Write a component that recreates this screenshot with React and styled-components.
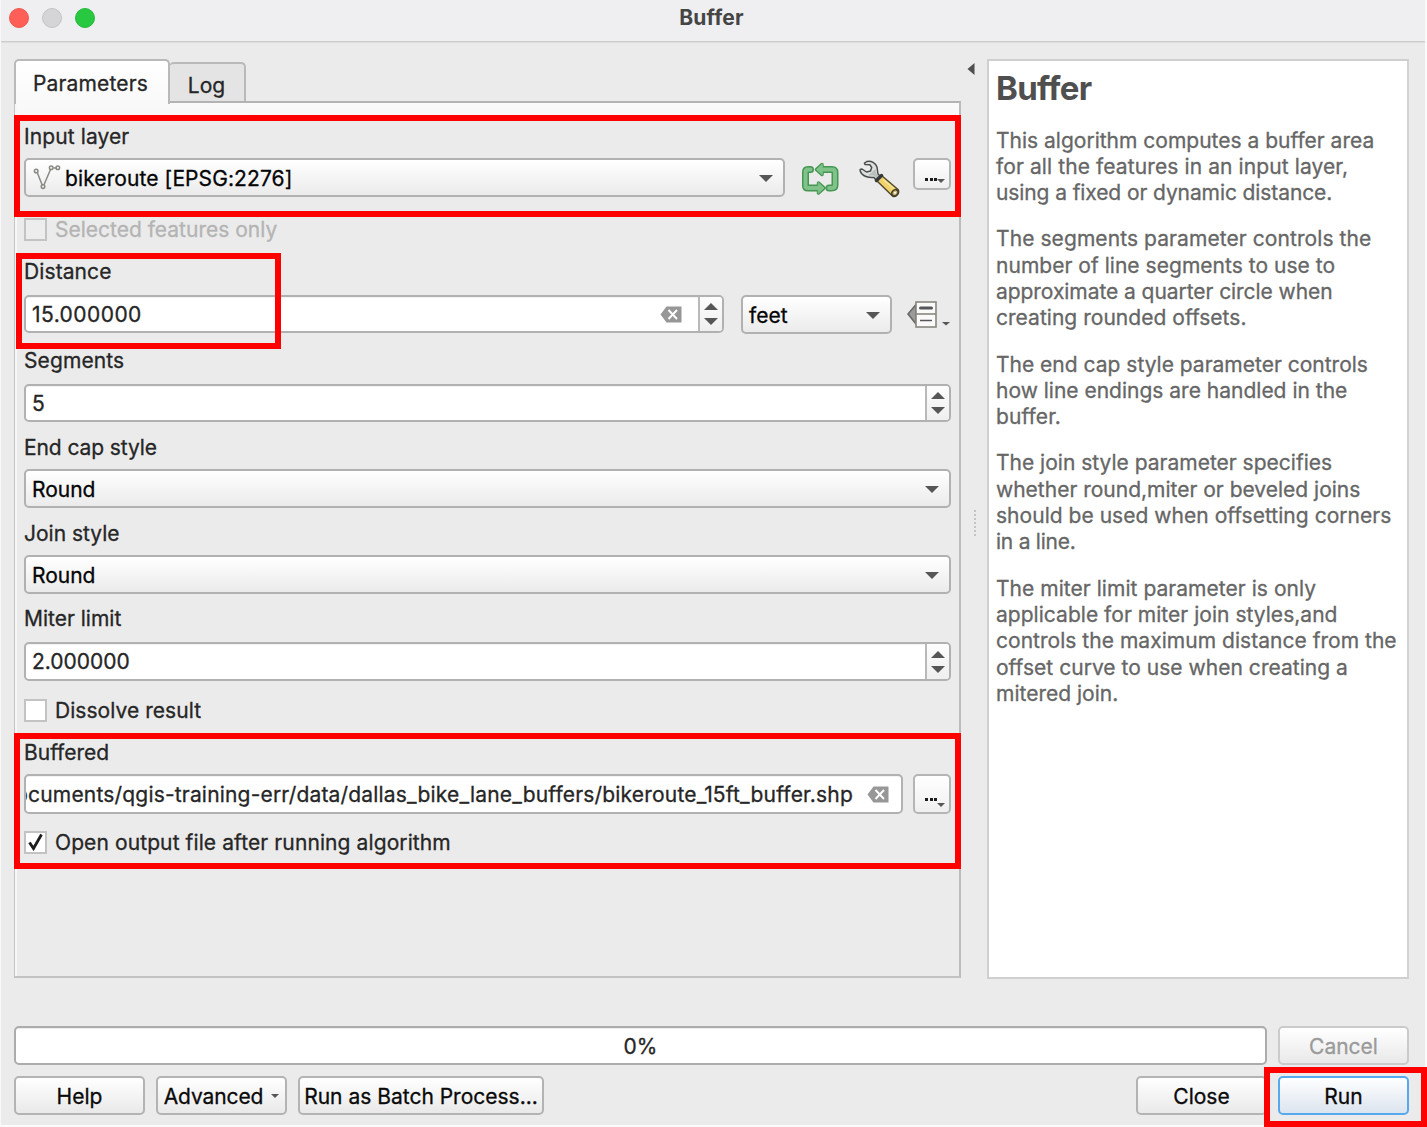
import React from "react";
import styled, { createGlobalStyle } from "styled-components";

const Global = createGlobalStyle`
  *, *::before, *::after { box-sizing: border-box; }
  html, body { margin: 0; padding: 0; background: #ebebeb; }
  body { font-family: Inter, "Liberation Sans", sans-serif; color: #262626; overflow: hidden; }
`;

const Stage = styled.div`
  position: relative;
  width: 1427px;
  height: 1127px;
  overflow: hidden;
`;

const Window = styled.div`
  width: 1427px;
  height: 1127px;
  background: #ebebeb;
  border-left: 1px solid #f8f8f8;
  border-right: 2px solid #fafafa;
  border-bottom: 2px solid #fbfbfb;
  display: flex;
  flex-direction: column;
  overflow: hidden;
`;

const TitleBar = styled.header`
  height: 42px;
  flex: none;
  display: grid;
  grid-template-columns: 120px 1fr 120px;
  background: #efeff1;
  border-bottom: 1px solid #cdcdcd;
  box-shadow: 0 1px 0 #dedede;
`;

const Lights = styled.div`
  display: flex;
  gap: 13px;
  padding: 8px 0 0 7.5px;
`;

const Light = styled.i`
  width: 20px;
  height: 20px;
  border-radius: 50%;
  background: ${(p) => p.$color};
  border: 1px solid ${(p) => p.$edge};
`;

const Title = styled.h1`
  margin: 0;
  text-align: center;
  font-size: 21px;
  line-height: 35px;
  font-weight: 700;
  letter-spacing: 0.2px;
  color: #454545;
  padding-right: 3px;
`;

const Text = styled.span`
  font-size: 21px;
  letter-spacing: ${(p) => p.$ls || 0}px;
  -webkit-text-stroke: 0.3px currentColor;
  color: ${(p) => p.$color || "inherit"};
  white-space: nowrap;
`;

const Body = styled.main`
  display: flex;
  height: 937px;
  padding-left: 13px;
  flex: none;
`;

const TabArea = styled.section`
  width: 947px;
  padding-top: 17px;
  display: flex;
  flex-direction: column;
`;

const Tabs = styled.nav`
  display: flex;
  align-items: flex-end;
  height: 44px;
  flex: none;
`;

const Tab = styled.div`
  display: flex;
  align-items: center;
  justify-content: center;
  border: 2px solid #b9b9b9;
  border-bottom: 0;
  border-radius: 5px 5px 0 0;
  ${(p) =>
    p.$active
      ? `width: 156px; height: 45px; margin-bottom: -1px; z-index: 1; padding-top: 1px;
         background: linear-gradient(#ffffff, #f9f9f9); padding-right: 3px;`
      : `width: 77px; height: 40px; margin-left: -1px; padding-top: 4px; margin-bottom: 1px;
         background: #e4e4e4; border-left: 0;`}
`;

const Pane = styled.div`
  margin-top: -2px;
  height: 877px;
  border: 2px solid #b3b3b3;
  border-left: 1px solid #c4c4c4;
  border-right-color: #bcbcbc;
  border-bottom: 2px solid #c2c2c2;
  padding: 20px 8px 0 9px;
  background: linear-gradient(#fafafa, #f7f7f7 13px, #ebebeb 14px);
  box-shadow: inset 2px 0 0 #f7f7f7;
  display: flex;
  flex-direction: column;
`;

const Label = styled.div`
  height: 26px;
  line-height: 28px;
  flex: none;
  margin-top: ${(p) => p.$top || 0}px;
`;

const Row = styled.div`
  display: flex;
  align-items: flex-start;
  flex: none;
  height: ${(p) => p.$h || 40}px;
  margin-top: ${(p) => p.$top || 0}px;
`;

const Combo = styled.div`
  display: flex;
  align-items: center;
  justify-content: space-between;
  width: ${(p) => (p.$w ? p.$w + "px" : "100%")};
  height: 39px;
  padding: 1px 10px 0 6px;
  margin-left: ${(p) => p.$left || 0}px;
  border: 2px solid #b1b1b1;
  border-radius: 5px;
  background: linear-gradient(#ffffff, #ebebeb);
  color: #050505;
`;

const Inline = styled.span`
  display: flex;
  align-items: center;
`;

const Field = styled.div`
  display: flex;
  align-items: center;
  justify-content: space-between;
  width: ${(p) => (p.$w ? p.$w + "px" : "100%")};
  height: ${(p) => p.$h || 38}px;
  padding-left: 6px;
  border: 2px solid #b1b1b1;
  border-radius: 5px;
  background: #fff;
  box-shadow: inset 0 1px 0 #f3f3f3;
  overflow: hidden;
`;

const Steps = styled.div`
  align-self: stretch;
  width: 24px;
  border-left: 2px solid #b9b9b9;
  background: linear-gradient(#fdfdfd, #efefef);
  display: flex;
  flex-direction: column;
  align-items: center;
  justify-content: center;
  gap: 8px;
`;

const Arrow = styled.i`
  display: block;
  border: ${(p) => p.$s || 7}px solid transparent;
  ${(p) =>
    p.$up
      ? `border-bottom: ${p.$s || 7}px solid #565656; border-top: 0;`
      : `border-top: ${p.$s || 7}px solid #565656; border-bottom: 0;`}
`;

const PathView = styled.div`
  flex: 1;
  min-width: 0;
  overflow: hidden;
  display: flex;
  justify-content: flex-end;
`;

const PathField = styled(Field)`
  padding: 0 12px 0 0;
  gap: 14px;
`;

const Dots = styled.div`
  width: 38px;
  height: ${(p) => p.$h}px;
  margin-left: auto;
  padding: 0 1px ${(p) => p.$bottom}px 10px;
  border: 2px solid #b5b5b5;
  border-radius: 5px;
  background: linear-gradient(#ffffff, #efefef);
  display: flex;
  align-items: flex-end;
`;

const DotRow = styled.span`
  display: flex;
  gap: 1.5px;
  padding-bottom: ${(p) => p.$lift}px;
  i { width: 3px; height: 3px; background: #1c1c1c; }
`;

const Check = styled.div`
  width: 23px;
  height: 23px;
  border: 2px solid #c3c3c3;
  background: ${(p) => (p.$off ? "#ededed" : "#fff")};
  margin-right: 8px;
  display: flex;
  align-items: center;
  justify-content: center;
`;

const CheckRow = styled(Row)`
  align-items: center;
  height: 24px;
`;

const Gutter = styled.div`
  width: 26px;
  padding: 20px 0 0 6px;
  display: flex;
  flex-direction: column;
  align-items: flex-start;
`;

const Grip = styled.svg`
  margin: 433px 0 0 6px;
`;

const Help = styled.aside`
  width: 422px;
  margin-top: 17px;
  height: 920px;
  background: #fff;
  border: 2px solid #cfcfcf;
  border-right-color: #d3d3d3;
  padding: 9px 0 0 7px;
  color: #666;
`;

const HelpTitle = styled.h2`
  margin: 0 0 21.5px;
  font-size: 33px;
  line-height: 36px;
  height: 36px;
  font-weight: 700;
  letter-spacing: -0.7px;
  color: #4f4f4f;
`;

const Para = styled.p`
  margin: 0 0 20px;
  line-height: 26.3px;
`;

const Line = styled(Text)`
  display: block;
`;

const Footer = styled.footer`
  padding: 47px 16px 0 13px;
  display: flex;
  flex-direction: column;
  gap: 11px;
`;

const FootRow = styled.div`
  display: flex;
  gap: 11px;
  height: 39px;
`;

const Progress = styled.div`
  flex: 1;
  border: 2px solid #acacac;
  border-radius: 5px;
  background: #fff;
  box-shadow: inset 0 1px 0 #ededed;
  display: flex;
  align-items: center;
  justify-content: center;
  padding-top: 1px;
`;

const Button = styled.button`
  width: ${(p) => p.$w}px;
  height: 39px;
  padding: 1px 0 0;
  display: flex;
  align-items: center;
  justify-content: center;
  gap: 8px;
  font-family: inherit;
  color: ${(p) => (p.$disabled ? "#9a9a9a" : "#0a0a0a")};
  border: 2px solid ${(p) => (p.$primary ? "#56a9ee" : p.$disabled ? "#cbcbcb" : "#b3b3b3")};
  border-radius: 5px;
  background: ${(p) =>
    p.$primary ? "linear-gradient(#ffffff, #dce4ee)" : "linear-gradient(#ffffff, #e9e9e9)"};
`;

const Spacer = styled.div`
  flex: 1;
`;

const ClearGap = styled.i`
  width: 16px;
`;

const Mark = styled.div`
  position: absolute;
  left: ${(p) => p.$x}px;
  top: ${(p) => p.$y}px;
  width: ${(p) => p.$w}px;
  height: ${(p) => p.$h}px;
  border: 6px solid #ff0000;
  z-index: 3;
`;

const VectorIcon = styled.svg`
  margin: 0 4px 0 1px;
`;

const LineLayer = () => (
  <VectorIcon width="28" height="26" viewBox="0 0 28 26" fill="none" stroke="#8a8a84" strokeWidth="1.5">
    <path d="M4 7 9.3 20.2M10.8 20.2 17.500 4.500M20.500 3h3.500" />
    <circle cx="3.2" cy="6" r="1.8" />
    <circle cx="10" cy="21.6" r="1.8" />
    <circle cx="18.2" cy="2.8" r="1.8" />
    <circle cx="24.8" cy="2.8" r="1.8" />
  </VectorIcon>
);

const IterateSvg = styled.svg`margin: 4px 0 0 16px;`;
const Iterate = () => (
  <IterateSvg width="38" height="34" viewBox="0 0 38 34">
    <g fill="none" strokeLinejoin="round" strokeLinecap="round">
      <path stroke="#459651" strokeWidth="7" d="M9.5 7.5H7Q4.5 7.5 4.5 10V24Q4.5 26 7 26H18M28 26h2.500Q34 26 34 23V10.500Q34 7.500 31 7.500H22" />
      <path fill="#459651" stroke="#459651" strokeWidth="3.500" d="M21 2.500 15.500 7.500 21 12.500ZM17.500 21 23 26 17.500 31Z" />
      <path stroke="#7fc38a" strokeWidth="4" d="M9.500 7.500H7Q4.500 7.500 4.500 10V24Q4.500 26 7 26H18M28 26h2.500Q34 26 34 23V10.500Q34 7.500 31 7.500H22" />
      <path fill="#7fc38a" stroke="#7fc38a" strokeWidth="1" d="M21 2.500 15.500 7.500 21 12.500ZM17.500 21 23 26 17.500 31Z" />
    </g>
  </IterateSvg>
);

const WrenchSvg = styled.svg`margin: 2px 0 0 20px;`;
const Wrench = () => (
  <WrenchSvg width="41" height="38" viewBox="0 0 41 38" strokeLinejoin="round" strokeLinecap="round">
    <path
      d="M5.500 3.200 7.800 1.500C12 .2 17 3 18 7.200L19 14 22 17 18 21 15 17.500C10 18 3 16.500 1.200 11L1.200 9.500 3 9 7.500 12 11.500 11 12.700 7.500 11 4.800 6 4.500Z"
      fill="#dde1de" stroke="#4a4d4c" strokeWidth="1.500"
    />
    <path d="M13 12 16.500 9 17.500 14 20 17 18 19 15 15.500 9 15.500Z" fill="#b9bfbc" />
    <path d="M22.500 15.500 39 29.500Q40.500 32 38.500 34.500 36 37.500 33.500 36L17.500 20.500Z" fill="#f0d36b" stroke="#54492f" strokeWidth="1.500" />
    <path d="M22.500 15.500 17.500 20.500" stroke="#35383a" strokeWidth="3.500" />
    <path d="M25 20 34 28" stroke="#fbe89c" strokeWidth="1.500" />
    <ellipse cx="36" cy="32.800" rx="3.400" ry="2.800" transform="rotate(-45 36 32.800)" fill="#cdb56a" stroke="#3e3a2e" strokeWidth="1.500" />
    <circle cx="36" cy="32.800" r="1" fill="#fff" />
  </WrenchSvg>
);

const Clear = () => (
  <svg width="22" height="17" viewBox="0 0 22 17">
    <path d="M6.500.5H21.500V16.500H6.500L.5 8.500Z" fill="#979797" />
    <path d="m8.500 4 8.500 9M17 4l-8.500 9" stroke="#fff" strokeWidth="1.900" />
  </svg>
);

const OverrideSvg = styled.svg`margin: 5px 0 0 15px;`;
const Override = () => (
  <OverrideSvg width="44" height="30" viewBox="0 0 44 30">
    <path d="M9 4.500 1 14 9 24Z" fill="#9a9a9a" stroke="#666" strokeWidth="1.500" />
    <rect x="9" y="2" width="20" height="25" fill="#fafafa" stroke="#88887f" strokeWidth="1.600" />
    <path d="M9 14h20" stroke="#88887f" strokeWidth="1.600" />
    <path d="M13.500 8h11" stroke="#55565a" strokeWidth="3" strokeLinecap="round" />
    <path d="M13 20.500h12" stroke="#55565a" strokeWidth="1.500" />
    <path d="M35 22h8l-4 3.500Z" fill="#565656" />
  </OverrideSvg>
);

const Stepper = () => (
  <Steps>
    <Arrow $up $s={7} />
    <Arrow $s={7} />
  </Steps>
);

const help = [
  [["This algorithm computes a buffer area"], ["for all the features in an input layer,", 0.1], ["using a fixed or dynamic distance.", -0.1]],
  [["The segments parameter controls the", 0.08], ["number of line segments to use to", 0.03], ["approximate a quarter circle when", -0.06], ["creating rounded offsets.", 0.03]],
  [["The end cap style parameter controls"], ["how line endings are handled in the"], ["buffer.", 0.1]],
  [["The join style parameter specifies"], ["whether round,miter or beveled joins"], ["should be used when offsetting corners", 0.03], ["in a line.", -0.25]],
  [["The miter limit parameter is only", 0.04], ["applicable for miter join styles,and", 0.03], ["controls the maximum distance from the", 0.03], ["offset curve to use when creating a", 0.03], ["mitered join."]],
];

export default function App() {
  return (
    <Stage>
      <Global />
      <Window>
        <TitleBar>
          <Lights>
            <Light $color="#ff5f57" $edge="#f0574f" />
            <Light $color="#d5d5d7" $edge="#c4c4c6" />
            <Light $color="#28c840" $edge="#24bb3a" />
          </Lights>
          <Title>Buffer</Title>
        </TitleBar>
        <Body>
          <TabArea>
            <Tabs>
              <Tab $active><Text $ls={0.15}>Parameters</Text></Tab>
              <Tab><Text>Log</Text></Tab>
            </Tabs>
            <Pane>
              <Label><Text $ls={0.1}>Input layer</Text></Label>
              <Row $top={9}>
                <Combo $w={761}>
                  <Inline><LineLayer /><Text $ls={0.1}>bikeroute [EPSG:2276]</Text></Inline>
                  <Arrow />
                </Combo>
                <Iterate />
                <Wrench />
                <Dots $h={32} $bottom={5}>
                  <DotRow $lift={2}><i /><i /><i /></DotRow>
                  <Arrow $s={4.5} />
                </Dots>
              </Row>
              <CheckRow $top={19}><Check $off /><Text $color="#b4b4b4">Selected features only</Text></CheckRow>
              <Label $top={17}><Text $ls={0.1}>Distance</Text></Label>
              <Row $top={11}>
                <Field $w={700}>
                  <Text $ls={0.45}>15.000000</Text>
                  <Spacer />
                  <Clear />
                  <ClearGap />
                  <Stepper />
                </Field>
                <Combo $w={151} $left={17}><Text>feet</Text><Arrow /></Combo>
                <Override />
              </Row>
              <Label $top={12}><Text $ls={0.1}>Segments</Text></Label>
              <Row $top={11} $h={38}><Field><Text>5</Text><Stepper /></Field></Row>
              <Label $top={12}><Text $ls={-0.1}>End cap style</Text></Label>
              <Row $top={9}><Combo><Text>Round</Text><Arrow /></Combo></Row>
              <Label $top={11}><Text>Join style</Text></Label>
              <Row $top={9}><Combo><Text>Round</Text><Arrow /></Combo></Row>
              <Label $top={10}><Text>Miter limit</Text></Label>
              <Row $top={11} $h={39}><Field $h={39}><Text>2.000000</Text><Stepper /></Field></Row>
              <CheckRow $top={17}><Check /><Text $ls={0.05}>Dissolve result</Text></CheckRow>
              <Label $top={17}><Text>Buffered</Text></Label>
              <Row $top={9}>
                <PathField $w={879} $h={40}>
                  <PathView><Text $ls={0.18}>ocuments/qgis-training-err/data/dallas_bike_lane_buffers/bikeroute_15ft_buffer.shp</Text></PathView>
                  <Clear />
                </PathField>
                <Dots $h={40} $bottom={5}>
                  <DotRow $lift={6}><i /><i /><i /></DotRow>
                  <Arrow $s={4.5} />
                </Dots>
              </Row>
              <CheckRow $top={16}>
                <Check>
                  <svg width="16" height="18" viewBox="0 0 16 18" fill="none" stroke="#1c1c1c" strokeWidth="2.8">
                    <path d="M1.500 9.500 5.500 15.500 13.500 1.500" />
                  </svg>
                </Check>
                <Text $ls={0.1}>Open output file after running algorithm</Text>
              </CheckRow>
            </Pane>
          </TabArea>
          <Gutter>
            <svg width="8" height="14" viewBox="0 0 8 14"><path d="M7.500 1v12L.5 7Z" fill="#4f4f4f" /></svg>
            <Grip width="4" height="30" viewBox="0 0 4 30" fill="#c4c4c4">
              {[0, 4, 8, 12, 16, 20, 24].map((y) => <rect key={y} x="1" y={y + 1} width="2" height="2" />)}
            </Grip>
          </Gutter>
          <Help>
            <HelpTitle>Buffer</HelpTitle>
            {help.map((p, i) => (
              <Para key={i}>{p.map(([t, ls]) => <Line key={t} $ls={ls}>{t}</Line>)}</Para>
            ))}
          </Help>
        </Body>
        <Footer>
          <FootRow>
            <Progress><Text>0%</Text></Progress>
            <Button $w={131} $disabled><Text>Cancel</Text></Button>
          </FootRow>
          <FootRow>
            <Button $w={131}><Text>Help</Text></Button>
            <Button $w={131}><Text $ls={-0.1}>Advanced</Text><Arrow $s={4.5} /></Button>
            <Button $w={246}><Text>Run as Batch Process...</Text></Button>
            <Spacer />
            <Button $w={131}><Text>Close</Text></Button>
            <Button $w={131} $primary><Text>Run</Text></Button>
          </FootRow>
        </Footer>
      </Window>
      <Mark $x={14} $y={115} $w={947} $h={102} />
      <Mark $x={16} $y={253} $w={265} $h={96} />
      <Mark $x={14} $y={733} $w={947} $h={136} />
      <Mark $x={1264} $y={1067} $w={163} $h={60} />
    </Stage>
  );
}
